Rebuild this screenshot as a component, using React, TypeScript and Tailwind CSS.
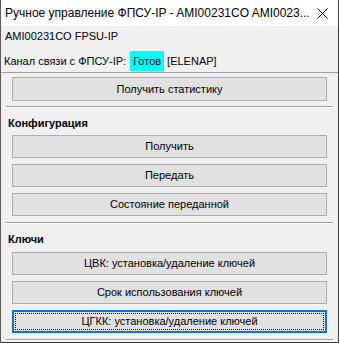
import React from "react";

const Btn = ({ label, focused = false, h = "h-[23px]" }: { label: string; focused?: boolean; h?: string }) => (
  <div
    className={
      "mx-[11px] flex items-center justify-center bg-[#e1e1e1] text-[11px] text-black " +
      h +
      (focused ? " border-2 border-[#0078d7] p-px" : " border border-[#adadad]")
    }
  >
    {focused ? (
      <div className="flex h-full w-full items-center justify-center border border-dotted border-black">{label}</div>
    ) : (
      label
    )}
  </div>
);

const Sep = () => (
  <div className="mx-[5px] h-[2px] border-t border-[#a0a0a0] border-b border-b-white" />
);

export default function App() {
  return (
    <div
      className="flex h-[343px] w-[339px] flex-col overflow-hidden border-b border-l border-r border-b-[#3c3c3c] border-l-[#5a5a5a] border-r-[#3c3c3c] bg-[#f0f0f0]"
      style={{ fontFamily: '"Liberation Sans", Arial, sans-serif' }}
    >
      <div className="flex h-[26px] shrink-0 items-center justify-between bg-white pl-[4px] pr-[10px]">
        <span className="whitespace-nowrap text-[12px] text-black">
          Ручное управление ФПСУ-IP - AMI00231CO AMI0023...
        </span>
        <svg width="11" height="11" viewBox="0 0 11 11" className="shrink-0">
          <path d="M0.5 0.5 L10.5 10.5 M10.5 0.5 L0.5 10.5" stroke="#000" strokeWidth="1" />
        </svg>
      </div>
      <div className="flex h-[46px] shrink-0 flex-col text-[11px] text-black">
        <div className="flex h-[20px] items-center pl-[4px]">AMI00231CO FPSU-IP</div>
        <div className="mt-[5px] flex h-[20px] items-center pl-[3px]">
          <span>Канал связи с ФПСУ-IP:</span>
          <span className="ml-[4px] flex h-[20px] items-center bg-[#00ffff] px-[3px]">Готов</span>
          <span className="ml-[3px]">[ELENAP]</span>
        </div>
      </div>
      <div className="h-px shrink-0 bg-[#a0a0a0]" />
      <div className="flex flex-col pt-[4px]">
        <Btn label="Получить статистику" h="h-[24px]" />
        <div className="mt-[5px]">
          <Sep />
        </div>
        <div className="flex h-[14px] items-center pl-[7px] mt-[8px] text-[11px] font-bold text-black">Конфигурация</div>
        <div className="mt-[5px] flex flex-col gap-[6px]">
          <Btn label="Получить" />
          <Btn label="Передать" />
          <Btn label="Состояние переданной" />
        </div>
        <div className="mt-[6px]">
          <Sep />
        </div>
        <div className="flex h-[14px] items-center pl-[7px] mt-[8px] text-[11px] font-bold text-black">Ключи</div>
        <div className="mt-[6px] flex flex-col gap-[6px]">
          <Btn label="ЦВК: установка/удаление ключей" />
          <Btn label="Срок использования ключей" />
          <Btn label="ЦГКК: установка/удаление ключей" focused />
        </div>
        <div className="mt-[6px]">
          <Sep />
        </div>
      </div>
    </div>
  );
}
